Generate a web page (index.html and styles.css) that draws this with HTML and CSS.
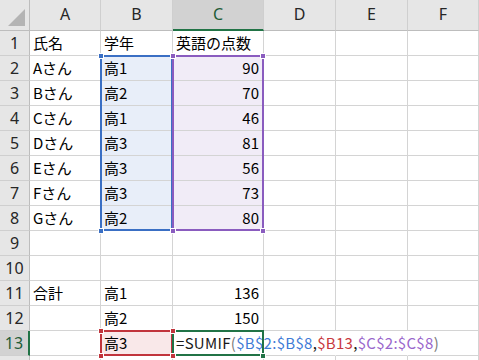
FILE: index.html
```html
<!DOCTYPE html>
<html lang="ja">
<head>
<meta charset="utf-8">
<link rel="stylesheet" href="styles.css">
</head>
<body>
<div class="sheet">
  <div class="grid">
    <div class="corner"><span class="tri"></span></div>
    <div class="ch">A</div><div class="ch">B</div><div class="ch ch-sel">C</div><div class="ch">D</div><div class="ch">E</div><div class="ch">F</div>

    <div class="rh">1</div><div class="c">氏名</div><div class="c">学年</div><div class="c">英語の点数</div><div class="c"></div><div class="c"></div><div class="c"></div>
    <div class="rh">2</div><div class="c">Aさん</div><div class="c fb">高1</div><div class="c fp num">90</div><div class="c"></div><div class="c"></div><div class="c"></div>
    <div class="rh">3</div><div class="c">Bさん</div><div class="c fb">高2</div><div class="c fp num">70</div><div class="c"></div><div class="c"></div><div class="c"></div>
    <div class="rh">4</div><div class="c">Cさん</div><div class="c fb">高1</div><div class="c fp num">46</div><div class="c"></div><div class="c"></div><div class="c"></div>
    <div class="rh">5</div><div class="c">Dさん</div><div class="c fb">高3</div><div class="c fp num">81</div><div class="c"></div><div class="c"></div><div class="c"></div>
    <div class="rh">6</div><div class="c">Eさん</div><div class="c fb">高3</div><div class="c fp num">56</div><div class="c"></div><div class="c"></div><div class="c"></div>
    <div class="rh">7</div><div class="c">Fさん</div><div class="c fb">高3</div><div class="c fp num">73</div><div class="c"></div><div class="c"></div><div class="c"></div>
    <div class="rh">8</div><div class="c">Gさん</div><div class="c fb">高2</div><div class="c fp num">80</div><div class="c"></div><div class="c"></div><div class="c"></div>
    <div class="rh">9</div><div class="c"></div><div class="c"></div><div class="c"></div><div class="c"></div><div class="c"></div><div class="c"></div>
    <div class="rh">10</div><div class="c"></div><div class="c"></div><div class="c"></div><div class="c"></div><div class="c"></div><div class="c"></div>
    <div class="rh">11</div><div class="c">合計</div><div class="c">高1</div><div class="c num">136</div><div class="c"></div><div class="c"></div><div class="c"></div>
    <div class="rh">12</div><div class="c"></div><div class="c">高2</div><div class="c num">150</div><div class="c"></div><div class="c"></div><div class="c"></div>
    <div class="rh rh-sel">13</div><div class="c"></div><div class="c fr">高3</div><div class="c active"><span class="formula">=SUMIF<span class="par">(</span><span class="fx-b">$B$2:$B$8</span>,<span class="fx-r">$B13</span>,<span class="fx-p">$C$2:$C$8</span><span class="par">)</span></span></div><div class="c nob"></div><div class="c nob"></div><div class="c"></div>
    <div class="rh"></div><div class="c"></div><div class="c"></div><div class="c"></div><div class="c"></div><div class="c"></div><div class="c"></div>
  </div>

  <div class="range r-blue"></div>
  <div class="range r-purple"></div>
  <div class="range r-red"></div>
  <div class="range r-green"></div>

  <span class="h h-blue" style="left:98px;top:53px"></span>
  <span class="h h-blue" style="left:98px;top:228px"></span>
  <span class="h h-purple" style="left:170px;top:53px"></span>
  <span class="h h-purple" style="left:260px;top:53px"></span>
  <span class="h h-purple" style="left:170px;top:228px"></span>
  <span class="h h-purple" style="left:260px;top:228px"></span>
  <span class="h h-red" style="left:98px;top:328px"></span>
  <span class="h h-red" style="left:170px;top:328px"></span>
  <span class="h h-red" style="left:98px;top:353px"></span>
  <span class="h h-red" style="left:170px;top:353px"></span>
  <span class="h h-green" style="left:260px;top:353px"></span>
</div>
</body>
</html>
```

FILE: styles.css
```css
* { box-sizing: border-box; }
html, body { margin: 0; padding: 0; background: #fff; }
body { width: 479px; height: 360px; overflow: hidden; }

.sheet {
  position: relative;
  width: 479px;
  height: 360px;
  overflow: hidden;
  font-family: "Noto Sans CJK JP", "Noto Sans", sans-serif;
  font-size: 15px;
  color: #000;
}

.grid {
  display: grid;
  grid-template-columns: 30px 71px 72px 91px 72px 72px 71px;
  grid-template-rows: 31px repeat(13, 25px) 25px;
}

.corner {
  background: #e6e6e6;
  border-right: 1px solid #bdbdbd;
  border-bottom: 1px solid #bdbdbd;
  position: relative;
}
.tri {
  position: absolute;
  left: 8px;
  top: 9px;
  width: 17px;
  height: 17px;
  background: #b4b4b4;
  clip-path: polygon(100% 0, 100% 100%, 0 100%);
}

.ch {
  background: #e6e6e6;
  border-right: 1px solid #cfcfcf;
  border-bottom: 1px solid #bdbdbd;
  display: flex;
  align-items: center;
  justify-content: center;
  color: #262626;
  font-family: "Noto Sans", sans-serif;
  font-size: 16px;
  padding-bottom: 2px;
}
.ch-sel {
  background: #d2d2d2;
  border-bottom: 2px solid #217346;
  color: #1f5c38;
}

.rh {
  background: #e6e6e6;
  border-right: 1px solid #bdbdbd;
  border-bottom: 1px solid #cfcfcf;
  display: flex;
  align-items: center;
  justify-content: center;
  color: #262626;
  font-family: "Noto Sans", sans-serif;
  font-size: 16px;
}
.rh-sel {
  background: #d2d2d2;
  border-right: 2px solid #217346;
  color: #1f5c38;
}

.c {
  border-right: 1px solid #d4d4d4;
  border-bottom: 1px solid #d4d4d4;
  display: flex;
  align-items: center;
  padding: 0 4px 1px 3px;
  white-space: nowrap;
  overflow: visible;
}
.num { justify-content: flex-end; }
.nob { border-right-color: transparent; }

.fb { background: #e8eef9; }
.fp { background: #f1ecf7; }
.fr { background: #f9e8e9; }

.active { position: relative; z-index: 2; }
.formula { color: #1a1a1a; letter-spacing: 0.3px; }
.par { color: #7a7a7a; }
.fx-b { color: #3f7bd6; }
.fx-r { color: #c8393e; }
.fx-p { color: #9966cc; }

.range {
  position: absolute;
  pointer-events: none;
  z-index: 3;
}
.r-blue { left: 100px; top: 55px; width: 73px; height: 176px; border: 2px solid #3a6fc4; }
.r-purple { left: 172px; top: 55px; width: 92px; height: 176px; border: 2px solid #8a5cbf; }
.r-red { left: 100px; top: 330px; width: 73px; height: 26px; border: 2px solid #c1343c; }
.r-green { left: 172px; top: 330px; width: 92px; height: 26px; border: 2px solid #217346; }

.h {
  position: absolute;
  width: 6px;
  height: 6px;
  z-index: 4;
  border: 1px solid #fff;
}
.h-blue { background: #3a6fc4; }
.h-purple { background: #8a5cbf; }
.h-red { background: #c1343c; }
.h-green { background: #217346; }
```
